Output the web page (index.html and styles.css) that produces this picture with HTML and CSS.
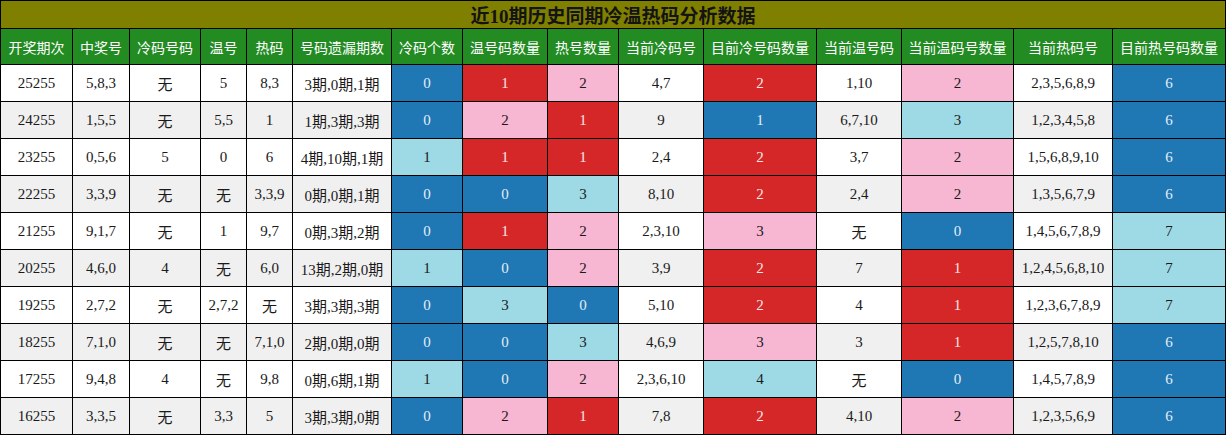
FILE: index.html
```html
<!DOCTYPE html>
<html lang="zh">
<head>
<meta charset="utf-8">
<title>近10期历史同期冷温热码分析数据</title>
<link rel="stylesheet" href="styles.css">
</head>
<body>
<table class="grid">
<colgroup>
<col class="w72"><col class="w57"><col class="w71"><col class="w46"><col class="w46"><col class="w99">
<col class="w71"><col class="w85"><col class="w71"><col class="w85"><col class="w113"><col class="w85">
<col class="w112"><col class="w99"><col class="w113">
</colgroup>
<thead>
<tr class="title-row"><th colspan="15" class="title">近10期历史同期冷温热码分析数据</th></tr>
<tr class="head-row">
<th>开奖期次</th><th>中奖号</th><th>冷码号码</th><th>温号</th><th>热码</th><th>号码遗漏期数</th><th>冷码个数</th><th>温号码数量</th><th>热号数量</th><th>当前冷码号</th><th>目前冷号码数量</th><th>当前温号码</th><th>当前温码号数量</th><th>当前热码号</th><th>目前热号码数量</th>
</tr>
</thead>
<tbody>
<tr><td>25255</td><td>5,8,3</td><td class="cn">无</td><td>5</td><td>8,3</td><td>3期,0期,1期</td><td class="b">0</td><td class="r">1</td><td class="p">2</td><td>4,7</td><td class="r">2</td><td>1,10</td><td class="p">2</td><td>2,3,5,6,8,9</td><td class="b">6</td></tr>
<tr><td>24255</td><td>1,5,5</td><td class="cn">无</td><td>5,5</td><td>1</td><td>1期,3期,3期</td><td class="b">0</td><td class="p">2</td><td class="r">1</td><td>9</td><td class="b">1</td><td>6,7,10</td><td class="l">3</td><td>1,2,3,4,5,8</td><td class="b">6</td></tr>
<tr><td>23255</td><td>0,5,6</td><td>5</td><td>0</td><td>6</td><td>4期,10期,1期</td><td class="l">1</td><td class="r">1</td><td class="r">1</td><td>2,4</td><td class="r">2</td><td>3,7</td><td class="p">2</td><td>1,5,6,8,9,10</td><td class="b">6</td></tr>
<tr><td>22255</td><td>3,3,9</td><td class="cn">无</td><td class="cn">无</td><td>3,3,9</td><td>0期,0期,1期</td><td class="b">0</td><td class="b">0</td><td class="l">3</td><td>8,10</td><td class="r">2</td><td>2,4</td><td class="p">2</td><td>1,3,5,6,7,9</td><td class="b">6</td></tr>
<tr><td>21255</td><td>9,1,7</td><td class="cn">无</td><td>1</td><td>9,7</td><td>0期,3期,2期</td><td class="b">0</td><td class="r">1</td><td class="p">2</td><td>2,3,10</td><td class="p">3</td><td class="cn">无</td><td class="b">0</td><td>1,4,5,6,7,8,9</td><td class="l">7</td></tr>
<tr><td>20255</td><td>4,6,0</td><td>4</td><td class="cn">无</td><td>6,0</td><td>13期,2期,0期</td><td class="l">1</td><td class="b">0</td><td class="p">2</td><td>3,9</td><td class="r">2</td><td>7</td><td class="r">1</td><td>1,2,4,5,6,8,10</td><td class="l">7</td></tr>
<tr><td>19255</td><td>2,7,2</td><td class="cn">无</td><td>2,7,2</td><td class="cn">无</td><td>3期,3期,3期</td><td class="b">0</td><td class="l">3</td><td class="b">0</td><td>5,10</td><td class="r">2</td><td>4</td><td class="r">1</td><td>1,2,3,6,7,8,9</td><td class="l">7</td></tr>
<tr><td>18255</td><td>7,1,0</td><td class="cn">无</td><td class="cn">无</td><td>7,1,0</td><td>2期,0期,0期</td><td class="b">0</td><td class="b">0</td><td class="l">3</td><td>4,6,9</td><td class="p">3</td><td>3</td><td class="r">1</td><td>1,2,5,7,8,10</td><td class="b">6</td></tr>
<tr><td>17255</td><td>9,4,8</td><td>4</td><td class="cn">无</td><td>9,8</td><td>0期,6期,1期</td><td class="l">1</td><td class="b">0</td><td class="p">2</td><td>2,3,6,10</td><td class="l">4</td><td class="cn">无</td><td class="b">0</td><td>1,4,5,7,8,9</td><td class="b">6</td></tr>
<tr><td>16255</td><td>3,3,5</td><td class="cn">无</td><td>3,3</td><td>5</td><td>3期,3期,0期</td><td class="b">0</td><td class="p">2</td><td class="r">1</td><td>7,8</td><td class="r">2</td><td>4,10</td><td class="p">2</td><td>1,2,3,5,6,9</td><td class="b">6</td></tr>
</tbody>
</table>
</body>
</html>
```

FILE: styles.css
```css
html, body {
  margin: 0;
  padding: 0;
  background: #ffffff;
}

.grid {
  border-collapse: collapse;
  table-layout: fixed;
  width: 1226px;
  font-family: "Liberation Serif", "Noto Sans CJK SC", serif;
  font-size: 15px;
  color: #1a1a1a;
}

.w72 { width: 72px; }
.w57 { width: 57px; }
.w71 { width: 71px; }
.w46 { width: 46px; }
.w99 { width: 99px; }
.w85 { width: 85px; }
.w113 { width: 113px; }
.w112 { width: 112px; }

.grid th,
.grid td {
  border: 1px solid #000000;
  padding: 0;
  text-align: center;
  vertical-align: middle;
  white-space: nowrap;
  overflow: hidden;
}

.title-row th {
  height: 27px;
  background: #808000;
  font-family: "Liberation Serif", "Noto Sans CJK SC", serif;
  font-weight: bold;
  font-size: 19px;
  color: #141414;
}

.head-row th {
  height: 35px;
  background: #228b22;
  color: #ffffff;
  font-family: "Noto Sans CJK SC", "Liberation Sans", sans-serif;
  font-weight: normal;
  font-size: 14px;
}

.grid tbody td {
  height: 36px;
}

.grid tbody tr { background: #ffffff; }
.grid tbody tr:nth-child(even) { background: #f0f0f0; }

.grid td.cn {
  font-family: "Noto Sans CJK SC", sans-serif;
}

.grid td.b { background: #1f77b4; color: #e4eef7; }
.grid td.r { background: #d62728; color: #f7e6e6; }
.grid td.p { background: #f7b6d2; color: #1a1a1a; }
.grid td.l { background: #9edae5; color: #1a1a1a; }
```
